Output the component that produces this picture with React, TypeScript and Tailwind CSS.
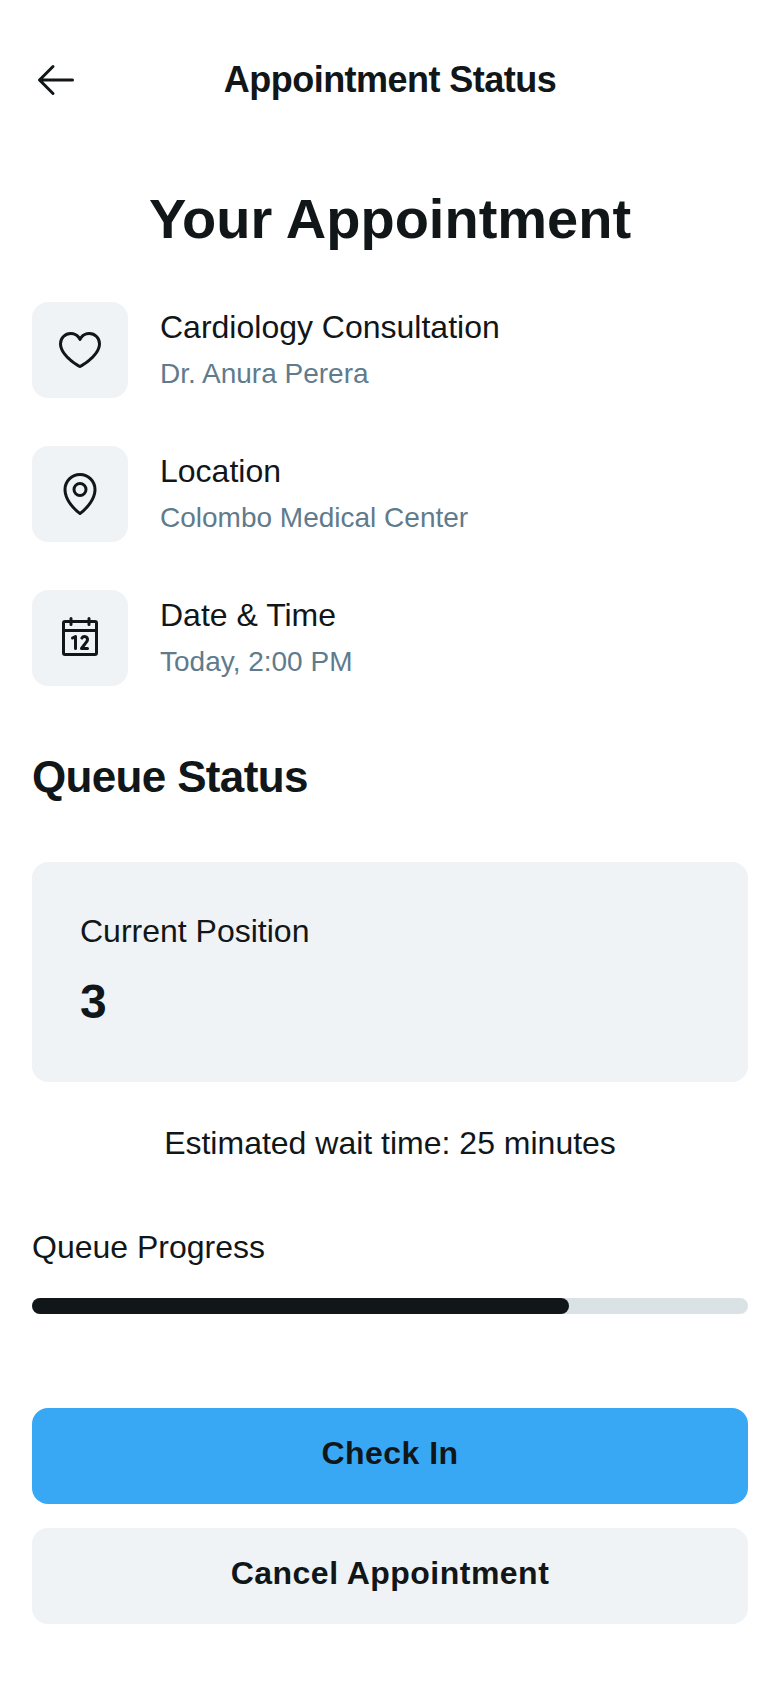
import type { ReactNode } from "react";

function Icon({ d }: { d: string }) {
  return (
    <svg viewBox="0 0 256 256" className="size-12" fill="currentColor" aria-hidden="true">
      <path d={d} />
    </svg>
  );
}

const ARROW_LEFT =
  "M224,128a8,8,0,0,1-8,8H59.31l58.35,58.34a8,8,0,0,1-11.32,11.32l-72-72a8,8,0,0,1,0-11.32l72-72a8,8,0,0,1,11.32,11.32L59.31,120H216A8,8,0,0,1,224,128Z";
const HEART =
  "M178,32c-20.65,0-38.73,8.88-50,23.89C116.73,40.88,98.65,32,78,32A62.07,62.07,0,0,0,16,94c0,70,103.79,126.66,108.21,129a8,8,0,0,0,7.58,0C136.21,220.66,240,164,240,94A62.07,62.07,0,0,0,178,32ZM128,206.8C109.74,196.16,32,147.69,32,94A46.06,46.06,0,0,1,78,48c19.45,0,35.78,10.36,42.6,27a8,8,0,0,0,14.8,0c6.82-16.67,23.15-27,42.6-27a46.06,46.06,0,0,1,46,46C224,147.61,146.24,196.15,128,206.8Z";
const MAP_PIN =
  "M128,64a40,40,0,1,0,40,40A40,40,0,0,0,128,64Zm0,64a24,24,0,1,1,24-24A24,24,0,0,1,128,128Zm0-112a88.1,88.1,0,0,0-88,88c0,31.4,14.51,64.68,42,96.25a254.19,254.19,0,0,0,41.45,38.3,8,8,0,0,0,9.18,0A254.19,254.19,0,0,0,174,200.25c27.45-31.57,42-64.85,42-96.25A88.1,88.1,0,0,0,128,16Zm0,206c-16.53-13-72-60.75-72-118a72,72,0,0,1,144,0C200,161.23,144.53,209,128,222Z";
const CALENDAR =
  "M208,32H184V24a8,8,0,0,0-16,0v8H88V24a8,8,0,0,0-16,0v8H48A16,16,0,0,0,32,48V208a16,16,0,0,0,16,16H208a16,16,0,0,0,16-16V48A16,16,0,0,0,208,32ZM72,48v8a8,8,0,0,0,16,0V48h80v8a8,8,0,0,0,16,0V48h24V80H48V48ZM208,208H48V96H208V208Zm-96-88v64a8,8,0,0,1-16,0V132.94l-4.42,2.22a8,8,0,0,1-7.16-14.32l16-8A8,8,0,0,1,112,120Zm59.16,30.45L152,176h16a8,8,0,0,1,0,16H136a8,8,0,0,1-6.4-12.8l28.78-38.37A8,8,0,1,0,145.07,132a8,8,0,1,1-13.85-8A24,24,0,0,1,176,136,23.76,23.76,0,0,1,171.16,150.45Z";

function DetailRow({ icon, title, children }: { icon: string; title: string; children: ReactNode }) {
  return (
    <li className="flex min-h-36 items-center gap-8 px-8 py-4">
      <div className="flex size-24 shrink-0 items-center justify-center rounded-2xl bg-[#eff3f6]">
        <Icon d={icon} />
      </div>
      <div className="flex flex-col justify-center gap-1">
        <p className="text-[32px] leading-[44px]">{title}</p>
        <p className="text-[28px] leading-[42px] text-[#5f7b8c]">{children}</p>
      </div>
    </li>
  );
}

export default function App() {
  const progress = 75;
  return (
    <div className="flex min-h-screen flex-col justify-between bg-white font-['Liberation_Sans',Arial,sans-serif] text-[#111618]">
      <div>
        <header className="flex items-center px-8 pt-8 pb-4">
          <button type="button" aria-label="Back" className="flex size-24 shrink-0 items-center">
            <Icon d={ARROW_LEFT} />
          </button>
          <h1 className="flex-1 pr-24 text-center text-[36px] leading-[44px] font-bold tracking-[-0.015em]">
            Appointment Status
          </h1>
        </header>
        <main>
          <h2 className="px-8 pt-10 pb-6 text-center text-[56px] leading-[70px] font-bold">Your Appointment</h2>
          <ul>
            <DetailRow icon={HEART} title="Cardiology Consultation">Dr. Anura Perera</DetailRow>
            <DetailRow icon={MAP_PIN} title="Location">Colombo Medical Center</DetailRow>
            <DetailRow icon={CALENDAR} title="Date &amp; Time">Today, 2:00 PM</DetailRow>
          </ul>
          <h2 className="px-8 pt-10 pb-[26px] text-[44px] leading-[54px] font-bold tracking-[-0.015em]">Queue Status</h2>
          <div className="p-8">
            <div className="flex flex-col gap-5 rounded-2xl bg-[#eff3f6] px-12 pt-12 pb-[50px]">
              <p className="text-[32px] leading-[42px]">Current Position</p>
              <p className="text-[48px] leading-[60px] font-bold">3</p>
            </div>
          </div>
          <p className="px-8 pt-2 pb-[30px] text-center text-[32px] leading-[42px]">Estimated wait time: 25 minutes</p>
          <div className="flex flex-col gap-[30px] p-8">
            <p id="queue-progress" className="text-[32px] leading-[42px]">Queue Progress</p>
            <div
              role="progressbar"
              aria-labelledby="queue-progress"
              aria-valuenow={progress}
              aria-valuemin={0}
              aria-valuemax={100}
              className="rounded-lg bg-[#dbe2e6]"
            >
              <div className="h-4 rounded-lg bg-[#111618]" style={{ width: `${progress}%` }} />
            </div>
          </div>
        </main>
      </div>
      <footer className="flex flex-col gap-6 px-8 pt-6 pb-16">
        <button
          type="button"
          className="h-24 w-full rounded-2xl bg-[#38a8f5] px-10 pb-1.5 text-[32px] leading-[42px] font-bold tracking-[0.015em]"
        >
          Check In
        </button>
        <button
          type="button"
          className="h-24 w-full rounded-2xl bg-[#eff3f6] px-10 pb-1.5 text-[32px] leading-[42px] font-bold tracking-[0.015em]"
        >
          Cancel Appointment
        </button>
      </footer>
    </div>
  );
}
